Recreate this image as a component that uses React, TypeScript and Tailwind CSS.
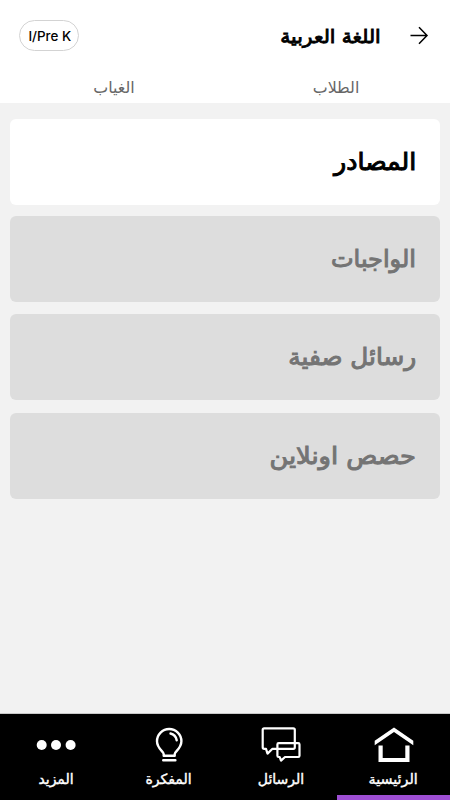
import type { ReactNode } from "react";

function Label({ children, className }: { children: ReactNode; className: string }) {
  return <span className={`block whitespace-nowrap ${className}`}>{children}</span>;
}

const cards = [
  { text: "المصادر", box: "bg-white text-black", label: "scale-x-[1.05]" },
  { text: "الواجبات", box: "mt-[11px] bg-[#ddd] text-[#747474]", label: "scale-x-100" },
  { text: "رسائل صفية", box: "mt-3 bg-[#ddd] text-[#747474]", label: "scale-x-[1.03]" },
  { text: "حصص اونلاين", box: "mt-[13px] bg-[#ddd] text-[#747474]", label: "scale-x-[1.07]" },
];

function HomeIcon() {
  return (
    <svg width="40" height="36" viewBox="0 0 40 36" fill="white">
      <path d="M20 0.4 39.3 13.8V18.3L20 4.9 0.7 18.3V13.8Z" />
      <path d="M4.5 18.6H8.7V31H31.3V18.6H35.5V35H4.5Z" />
    </svg>
  );
}

function ChatIcon() {
  return (
    <svg width="40" height="36" viewBox="0 0 40 36" fill="none" stroke="white" strokeWidth="2.2" strokeLinejoin="round">
      <path d="M3.2 1.3H32.3Q33.8 1.3 33.8 2.8V20.3Q33.8 21.8 32.3 21.8H11.5L6.5 26.6 5 21.8H3.2Q1.7 21.8 1.7 20.3V2.8Q1.7 1.3 3.2 1.3Z" />
      <path d="M17.7 16.2H37.2Q38.5 16.2 38.5 17.5V28.7Q38.5 30 37.2 30H24L20 33.6 18.7 30H17.7Q16.4 30 16.4 28.7V17.5Q16.4 16.2 17.7 16.2Z" />
    </svg>
  );
}

function BulbIcon() {
  return (
    <svg width="40" height="36" viewBox="0 0 40 36" fill="none" stroke="white" strokeWidth="2.4" strokeLinecap="round" strokeLinejoin="round">
      <path d="M14.7 28.7V27C14.7 24.5 8 21.5 8 14.2A12.2 12.2 0 0 1 32.4 14.2C32.4 21.5 25.7 24.5 25.7 27V28.7Z" />
      <path d="M21.5 6.5Q26.6 7.6 27.7 13.2M14.2 33.3H26.4" />
    </svg>
  );
}

function MoreIcon() {
  return (
    <svg width="40" height="36" viewBox="0 0 40 36" fill="white">
      <circle cx="5.7" cy="18" r="5" />
      <circle cx="20" cy="18" r="5" />
      <circle cx="34.6" cy="18" r="5" />
    </svg>
  );
}

const tabs = [
  { text: "الرئيسية", icon: <HomeIcon />, bar: "bg-[#9d4ed3]", label: "pl-0 scale-x-[1.02]" },
  { text: "الرسائل", icon: <ChatIcon />, bar: "bg-black", label: "scale-x-100" },
  { text: "المفكرة", icon: <BulbIcon />, bar: "bg-black", label: "scale-x-100" },
  { text: "المزيد", icon: <MoreIcon />, bar: "bg-black", label: "scale-x-100" },
];

export default function App() {
  return (
    <div dir="rtl" className="flex h-[800px] w-[450px] flex-col overflow-hidden bg-[#f2f2f2] font-['DejaVu_Sans',sans-serif]">
      <header className="flex h-[103px] shrink-0 flex-col bg-white">
        <div className="flex h-[71px] items-center pr-[21px] pl-[19px]">
          <svg width="20" height="20" viewBox="0 0 20 20" fill="none" stroke="black" strokeWidth="1.5">
            <path d="M1.5 9.5H18M10 1.2 18 9.5 10 17.8" />
          </svg>
          <h1 className="mr-[28px] text-[19px] leading-6 [-webkit-text-stroke:0.9px_black]">
            <Label className="origin-right scale-x-[1.06]">اللغة العربية</Label>
          </h1>
          <div dir="ltr" className="mr-auto flex h-[31px] w-[60px] items-center justify-center rounded-full border border-[#d3d3d3] pt-0.5 pl-px font-['Inter',sans-serif] text-[13px] font-medium text-black">
            <Label className="scale-x-[1.03]">I/Pre K</Label>
          </div>
        </div>
        <nav className="grid h-8 grid-cols-2 text-center text-[16px] leading-[33px] text-[#666]">
          <Label className="pl-0 pr-[3px] scale-x-[0.99]">الطلاب</Label>
          <Label className="pl-[3px] scale-x-[0.99]">الغياب</Label>
        </nav>
      </header>
      <main className="flex min-h-0 flex-1 flex-col px-2.5 pt-4">
        {cards.map((card) => (
          <section key={card.text} className={`flex h-[86px] shrink-0 items-center rounded-md pr-6 pb-px text-[24px] [-webkit-text-stroke:1px_currentColor] ${card.box}`}>
            <Label className={`origin-right ${card.label}`}>{card.text}</Label>
          </section>
        ))}
      </main>
      <footer className="grid h-[87px] shrink-0 grid-cols-[113px_112px_113px_112px] border-t border-[#c8c8c8] bg-black text-white">
        {tabs.map((tab) => (
          <div key={tab.text} className="flex flex-col items-center pt-[13px]">
            {tab.icon}
            <Label className={`mt-1.5 text-[14px] leading-5 [-webkit-text-stroke:0.4px_white] ${tab.label}`}>{tab.text}</Label>
            <div className={`mt-auto h-[5px] w-full ${tab.bar}`} />
          </div>
        ))}
      </footer>
    </div>
  );
}
